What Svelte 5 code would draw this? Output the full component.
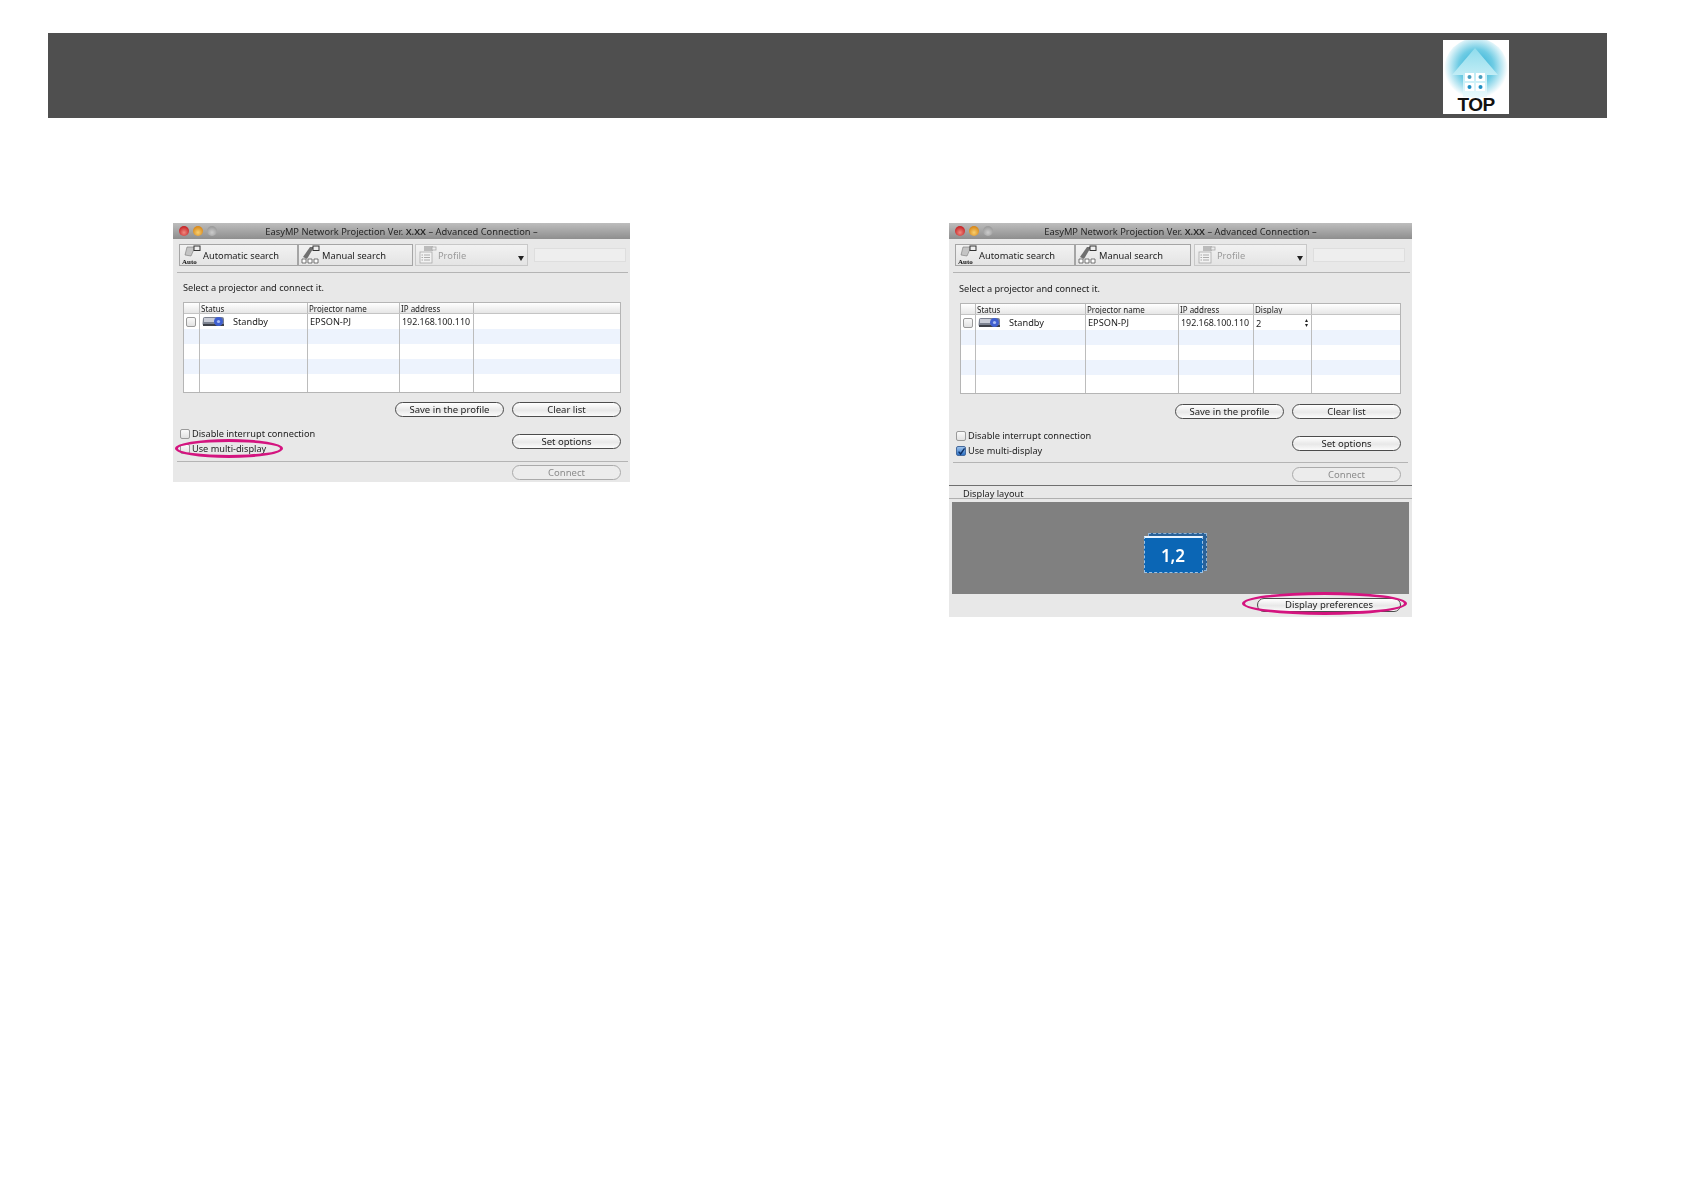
<script>
  const rows = [0, 1, 2, 3, 4]
</script>

{#snippet projector()}
  <svg class="projector" viewBox="0 0 22 11" width="22" height="11">
    <path d="M1 2.5 Q1 1 3 1 H20 Q22 1 22 3 V8 Q22 10 19 10 H3 Q0.5 10 0.5 8 Z" fill="#7c8290" />
    <path d="M2 2 H14 V6 H2 Z" fill="#c9ccd6" />
    <path d="M1 8 H22 V10 H1 Z" fill="#3d4048" />
    <circle cx="16.5" cy="5.5" r="4.5" fill="#3f5fd0" />
    <circle cx="16.5" cy="5.5" r="1.6" fill="#a9bcf2" />
  </svg>
{/snippet}

{#snippet autoIcon()}
  <span class="tool-icon">
    <svg viewBox="0 0 20 20" width="20" height="20">
      <path d="M5 2 H13 L9 11 L3 10 Z" fill="#c4c4c4" stroke="#777" stroke-width="0.6" />
      <rect x="12" y="1" width="6" height="4.5" fill="#eee" stroke="#333" stroke-width="1" />
      <text x="0" y="19" class="auto">Auto</text>
    </svg>
  </span>
{/snippet}

{#snippet manualIcon()}
  <span class="tool-icon">
    <svg viewBox="0 0 20 20" width="20" height="20">
      <path d="M2 12 L9 2 H13 L6 14 Z" fill="#6f6f6f" />
      <rect x="12" y="1" width="6" height="4.5" fill="#eee" stroke="#333" stroke-width="1" />
      <path d="M1 14 H5 V18 H1 Z M7 14 H11 V18 H7 Z M13 14 H17 V18 H13 Z" fill="#fff" stroke="#555" stroke-width="0.8" />
    </svg>
  </span>
{/snippet}

{#snippet profileIcon()}
  <span class="tool-icon">
    <svg viewBox="0 0 20 20" width="20" height="20">
      <rect x="6" y="1" width="9" height="5" fill="#bbb" />
      <rect x="14" y="2" width="4" height="3" fill="#eee" stroke="#aaa" stroke-width="0.8" />
      <rect x="2" y="7" width="12" height="11" fill="#f2f2f2" stroke="#aaa" stroke-width="0.8" />
      <path d="M6 10 H12 M6 12.5 H12 M6 15 H12 M3.5 10 H5 M3.5 12.5 H5 M3.5 15 H5" stroke="#999" stroke-width="0.8" />
    </svg>
  </span>
{/snippet}

<header class="top-bar">
  <a class="top-link" href="#top">
    <svg viewBox="0 0 66 74" width="66" height="74">
      <defs>
        <radialGradient id="halo" cx="50%" cy="45%" r="50%">
          <stop offset="0" stop-color="#1ea9d2" />
          <stop offset="0.55" stop-color="#6fcce4" />
          <stop offset="1" stop-color="#ffffff" />
        </radialGradient>
        <linearGradient id="house" x1="0" y1="0" x2="0" y2="1">
          <stop offset="0" stop-color="#8fdcec" />
          <stop offset="1" stop-color="#eafafd" />
        </linearGradient>
      </defs>
      <rect width="66" height="74" fill="#fff" />
      <circle cx="33" cy="30" r="32" fill="url(#halo)" />
      <path d="M32 8 L55 35 H44 V57 H20 V35 H9 Z" fill="url(#house)" />
      <path d="M22 33 H31 V41 H22 Z M33 33 H42 V41 H33 Z M22 43 H31 V51 H22 Z M33 43 H42 V51 H33 Z" fill="#fff" />
      <circle cx="26.5" cy="37" r="2" fill="#4a9fc0" />
      <circle cx="37.5" cy="37" r="2" fill="#4a9fc0" />
      <circle cx="26.5" cy="47" r="2" fill="#1e8fc4" />
      <circle cx="37.5" cy="47" r="2" fill="#1e8fc4" />
    </svg>
    <span class="top-label">TOP</span>
  </a>
</header>

<main class="shots">
  {#each [false, true] as multi}
    <section class="win" class:multi>
      <div class="titlebar">
        <span class="light red"></span>
        <span class="light amber"></span>
        <span class="light off"></span>
        <span class="title">EasyMP Network Projection Ver. <b>X.XX</b> – Advanced Connection –</span>
      </div>

      <div class="toolbar">
        <div class="tab auto-tab">{@render autoIcon()}Automatic search</div>
        <div class="tab manual-tab">{@render manualIcon()}Manual search</div>
        <div class="tab profile-tab">{@render profileIcon()}Profile<span class="caret"></span></div>
        <div class="field"></div>
      </div>
      <hr class="rule" />

      <p class="prompt">Select a projector and connect it.</p>

      <div class="list">
        <div class="row head">
          <span></span>
          <span>Status</span>
          <span>Projector name</span>
          <span>IP address</span>
          {#if multi}<span>Display</span>{/if}
          <span></span>
        </div>
        {#each rows as i}
          <div class="row" class:alt={i % 2 === 1}>
            {#if i === 0}
              <span class="check-cell"><span class="box"></span></span>
              <span class="status">{@render projector()}Standby</span>
              <span>EPSON-PJ</span>
              <span class="ip">192.168.100.110</span>
              {#if multi}
                <span class="display">2<span class="stepper">▴<br />▾</span></span>
              {/if}
              <span></span>
            {:else}
              <span></span><span></span><span></span><span></span>
              {#if multi}<span></span>{/if}
              <span></span>
            {/if}
          </div>
        {/each}
      </div>

      <div class="actions">
        <button class="pill save">Save in the profile</button>
        <button class="pill">Clear list</button>
      </div>

      <div class="options">
        <div class="checks">
          <label><span class="box"></span>Disable interrupt connection</label>
          <label>
            {#if multi}
              <span class="box checked">
                <svg viewBox="0 0 10 10" width="10" height="10"><path d="M2 4.5 L4.5 7.5 L9.5 0.5" fill="none" stroke="#0c2f66" stroke-width="1.8" /></svg>
              </span>
            {:else}
              <span class="box"></span>
            {/if}
            Use multi-display
          </label>
        </div>
        <button class="pill">Set options</button>
      </div>
      <hr class="rule" />

      <div class="connect">
        <button class="pill" disabled>Connect</button>
      </div>

      {#if multi}
        <div class="layout-head">Display layout</div>
        <div class="layout">
          <div class="screen">
            <div class="screen-back"></div>
            <div class="screen-front">1,2</div>
          </div>
        </div>
        <div class="layout-foot">
          <button class="pill prefs">Display preferences</button>
        </div>
      {/if}

      <div class="ring"></div>
    </section>
  {/each}
</main>

<style>
  :global(body) {
    background: #fff;
    font-family: "Noto Sans", sans-serif;
  }

  .top-bar {
    display: flex;
    justify-content: flex-end;
    align-items: flex-start;
    height: 85px;
    box-sizing: border-box;
    margin: 33px 77px 0 48px;
    padding: 7px 98px 0 0;
    background: #4f4f4f;
  }

  .top-link {
    position: relative;
    display: block;
    width: 66px;
    height: 74px;
    text-decoration: none;
  }

  .top-label {
    position: absolute;
    left: 0;
    right: 0;
    bottom: -1px;
    text-align: center;
    font: bold 19px/20px "Liberation Sans", sans-serif;
    letter-spacing: -0.5px;
    color: #111;
  }

  .shots {
    display: flex;
    align-items: flex-start;
    gap: 319px;
    padding: 105px 0 0 173px;
  }

  .win {
    --tab1: 119px;
    --tab2: 115px;
    --tab3: 113px;
    --tab-gap: 2px;
    --side: 10px;
    --right: 9px;
    --cols: 15px 108px 92px 74px 1fr;
    position: relative;
    width: 457px;
    background: #e8e8e8;
    font-size: 9.2px;
    color: #222;
    filter: blur(0.35px);
  }

  .win.multi {
    --tab1: 120px;
    --tab2: 116px;
    --tab-gap: 3px;
    --side: 11px;
    --right: 11px;
    --cols: 14px 110px 93px 75px 58px 1fr;
    width: 463px;
  }

  .titlebar {
    display: flex;
    align-items: center;
    gap: 4px;
    height: 16px;
    padding-left: 6px;
    background: linear-gradient(#bdbdbd, #8e8e8e);
    position: relative;
  }

  .light {
    width: 10px;
    height: 10px;
    border-radius: 50%;
  }

  .red { background: radial-gradient(circle at 50% 65%, #f08a80, #c8282a 70%); }
  .amber { background: radial-gradient(circle at 50% 65%, #f8d070, #d98a1c 70%); }
  .off { background: radial-gradient(circle at 50% 65%, #ccc, #9c9c9c 70%); }

  .title {
    position: absolute;
    left: 0;
    right: 0;
    text-align: center;
    color: #262626;
    font-size: 9.3px;
  }

  .title b {
    font-weight: 600;
  }

  .toolbar {
    display: flex;
    align-items: stretch;
    height: 22px;
    padding: 5px 0 0 6px;
  }

  .tab {
    display: flex;
    align-items: center;
    box-sizing: border-box;
    gap: 1px;
    padding-left: 2px;
    border: 1px solid #a5a5a5;
    background: linear-gradient(#f2f2f2, #e4e4e4);
    font-size: 9.3px;
  }

  .auto-tab { width: var(--tab1); }
  .manual-tab { width: var(--tab2); margin-left: 0; }

  .profile-tab {
    position: relative;
    width: var(--tab3);
    margin-left: var(--tab-gap);
    border-color: #c8c8c8;
    color: #9a9a9a;
    gap: 0;
  }

  .caret {
    position: absolute;
    right: 3px;
    bottom: 4px;
    border: 3px solid transparent;
    border-top: 5px solid #222;
    border-bottom: 0;
  }

  .tool-icon {
    display: flex;
    flex: none;
  }

  .auto {
    font: bold 7px "Liberation Serif", serif;
    fill: #111;
  }

  .field {
    flex: none;
    width: 92px;
    height: 14px;
    margin: 4px 0 0 6px;
    background: #eee;
    border: 1px solid #dedede;
    box-sizing: border-box;
  }

  .rule {
    height: 1px;
    margin: 6px 2px 0 4px;
    border: 0;
    background: #b4b4b4;
  }

  .prompt {
    display: flex;
    align-items: center;
    height: 29px;
    margin: 0 0 0 10px;
  }

  .multi .prompt {
    height: 30px;
    margin-left: 10px;
  }

  .list {
    margin: 0 var(--right) 0 var(--side);
    border: 1px solid #b5b5b5;
    border-top: 0;
    background: #fff;
  }

  .row {
    display: grid;
    grid-template-columns: var(--cols);
    height: 15px;
    line-height: 15px;
  }

  .row > span {
    border-left: 1px solid #bcbcbc;
    padding-left: 2px;
    white-space: nowrap;
    overflow: hidden;
  }

  .row > span:first-child {
    border-left: 0;
  }

  .row:last-child {
    height: 18px;
  }

  .row.alt {
    background: #edf3fd;
  }

  .row > .ip {
    font-size: 8.9px;
  }

  .head {
    height: 12px;
    line-height: 11px;
    font-size: 8px;
    background: linear-gradient(#fff, #e6e6e6);
    border-top: 1px solid #b5b5b5;
    border-bottom: 1px solid #c4c4c4;
    box-sizing: border-box;
  }

  .row.head > span {
    padding-left: 1px;
  }

  .check-cell {
    display: flex;
    align-items: center;
  }

  .status {
    display: flex;
    align-items: center;
    gap: 9px;
  }

  .projector {
    flex: none;
  }

  .display {
    position: relative;
    line-height: 17px;
  }

  .stepper {
    position: absolute;
    top: 3px;
    right: 3px;
    font-size: 6px;
    line-height: 5px;
  }

  .box {
    display: inline-flex;
    flex: none;
    box-sizing: border-box;
    width: 10px;
    height: 10px;
    border: 1px solid #9a9a9a;
    border-radius: 2px;
    background: linear-gradient(#fafafa, #e2e2e2);
  }

  .box.checked {
    background: linear-gradient(#9cc2ec, #2e72c4);
    border-color: #45699c;
  }

  .actions {
    display: flex;
    justify-content: flex-end;
    gap: 8px;
    margin: 9px var(--right) 0 0;
  }

  .multi .actions {
    margin-top: 10px;
  }

  .pill {
    box-sizing: border-box;
    width: 109px;
    height: 15px;
    padding: 0;
    border: 1px solid #4c4c4c;
    border-radius: 8px;
    background: linear-gradient(#fff, #e8e8e8 55%, #fbfbfb);
    font: 9.5px/13px "Noto Sans", sans-serif;
    color: #222;
  }

  .pill:disabled {
    border-color: #aaa;
    color: #8b8b8b;
    background: #ececec;
  }

  .multi .pill.prefs {
    width: 144px;
    height: 14px;
    line-height: 12px;
  }

  .options {
    display: flex;
    justify-content: space-between;
    align-items: center;
    margin: 9px var(--right) 0 7px;
  }

  .checks {
    display: flex;
    flex-direction: column;
  }

  .checks label {
    display: flex;
    align-items: center;
    gap: 2px;
    height: 15px;
  }

  .win .options + .rule {
    margin-top: 5px;
  }

  .multi .options + .rule {
    margin: 4px 4px 0 4px;
  }

  .connect {
    display: flex;
    justify-content: flex-end;
    padding: 3px var(--right) 2px 0;
  }

  .multi .connect {
    padding: 4px var(--right) 3px 0;
  }

  .layout-head {
    box-sizing: border-box;
    height: 14px;
    padding: 3px 0 0 14px;
    line-height: 10px;
    border-top: 1px solid #6f6f6f;
    border-bottom: 1px solid #b0b0b0;
  }

  .layout {
    display: flex;
    justify-content: center;
    align-items: center;
    height: 92px;
    margin: 3px 3px 0;
    padding: 10px 11px 0 0;
    box-sizing: border-box;
    background: #808080;
  }

  .screen {
    position: relative;
    width: 63px;
    height: 40px;
  }

  .screen-back {
    position: absolute;
    top: 0;
    right: 0;
    width: 59px;
    height: 38px;
    background: #2a6299;
    border: 1px dashed #8fb2d4;
    box-sizing: border-box;
  }

  .screen-front {
    position: absolute;
    left: 0;
    bottom: 0;
    box-sizing: border-box;
    width: 59px;
    height: 37px;
    padding-top: 3px;
    border: 1px dashed #9cc2e6;
    border-top: 2px solid #e8f4ff;
    background: #0b66b5;
    color: #fff;
    text-align: center;
    font: 600 17px/30px "Noto Sans", sans-serif;
  }

  .layout-foot {
    display: flex;
    justify-content: flex-end;
    padding: 4px var(--right) 5px 0;
  }

  .ring {
    position: absolute;
    box-sizing: border-box;
    left: 2px;
    top: 216px;
    width: 108px;
    height: 19px;
    border: 3px solid #d4147f;
    border-radius: 50%;
  }

  .multi .ring {
    left: 293px;
    top: 369px;
    width: 165px;
    height: 23px;
  }
</style>
